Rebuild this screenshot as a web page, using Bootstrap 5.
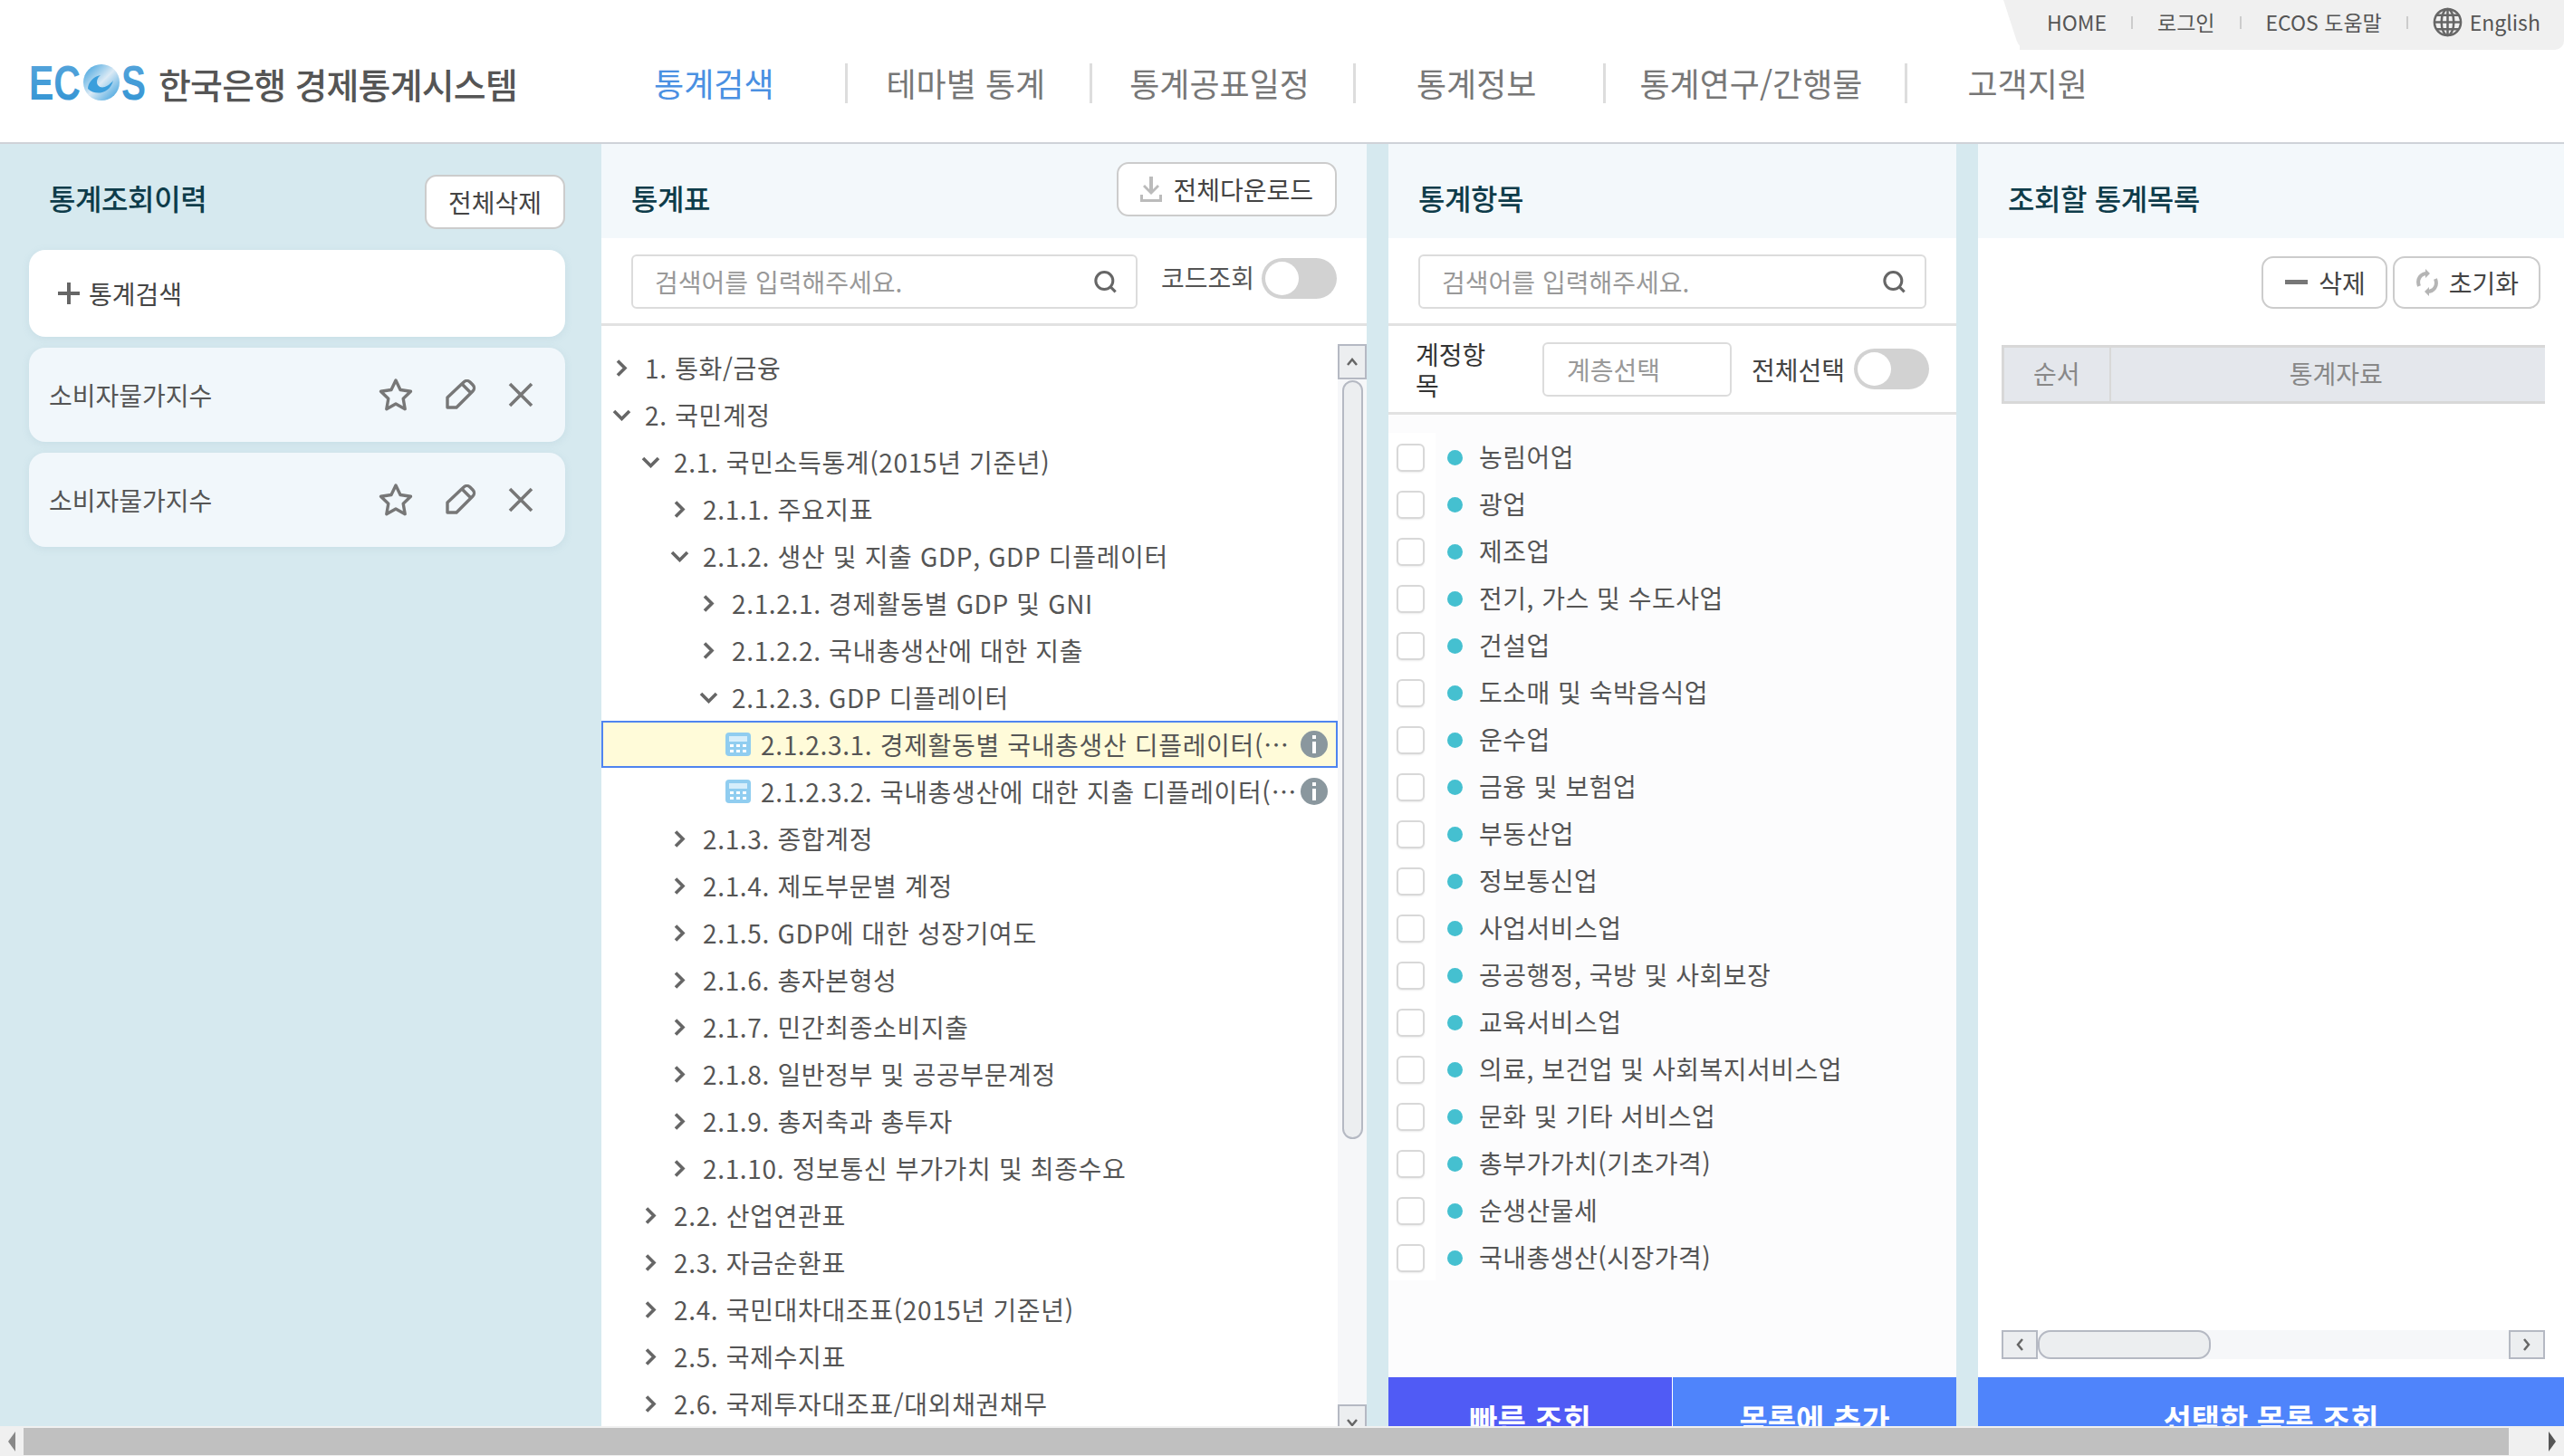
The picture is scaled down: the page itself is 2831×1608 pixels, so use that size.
<!DOCTYPE html>
<html lang="ko">
<head>
    <meta charset="UTF-8">
    <title>ECOS 한국은행 경제통계시스템</title>
    <link href="https://cdn.jsdelivr.net/npm/bootstrap@5.3.3/dist/css/bootstrap.min.css" rel="stylesheet">
    <script src="https://cdn.jsdelivr.net/npm/bootstrap@5.3.3/dist/js/bootstrap.bundle.min.js"></script>
    <style>
        html, body { height: 100%; overflow: hidden; }
        body { font-family: "Noto Sans CJK KR", "Noto Sans", sans-serif; font-size: 28px; color: #555; background: #fff; }

        /* header */
        .top-head { height: 159px; border-bottom: 2px solid #cfd2d8; }
        .util-tab { position: relative; height: 55px; width: 601px; padding: 0 0 6px 30px; background: #f0f0f0; border-bottom-right-radius: 10px; font-size: 23px; color: #555; }
        .util-tab::before { content: ""; position: absolute; left: -9px; top: 0; bottom: 0; width: 40px; background: #f0f0f0; transform: skewX(18deg); border-bottom-left-radius: 10px; }
        .util-tab > * { position: relative; }
        .util-sep { width: 2px; height: 14px; background: #ccc; margin: 0 27px; }
        .head-row { height: 102px; padding: 0 0 28px 32px; }
        .logo-mark { flex: none; font-family: "Liberation Sans", sans-serif; font-weight: 700; font-size: 53px; }
        .logo-kr { font-size: 39px; font-weight: 500; color: #555; margin-left: 14px; letter-spacing: -.8px; white-space: nowrap; line-height: 1; }
        .gnb { margin-left: 151px; }
        .gnb-item { font-size: 36px; color: #777; white-space: nowrap; line-height: 1.2; border-left: 3px solid #ddd; }
        .gnb-item:nth-child(1) { border-left: 0; padding-right: 78px; color: #4a90e2; }
        .gnb-item:nth-child(2) { padding: 0 49px 0 43px; }
        .gnb-item:nth-child(3) { padding: 0 48px 0 41px; }
        .gnb-item:nth-child(4) { padding: 0 74px 0 67px; }
        .gnb-item:nth-child(5) { padding: 0 47px 0 37px; }
        .gnb-item:nth-child(6) { padding: 0 0 0 66px; }

        /* panels */
        .main-wrap { height: 1416px; overflow: hidden; background: #d6e9ef; align-items: flex-start; }
        .pane { height: 1452px; background: #fff; margin-right: 24px; }
        .pane-hist { width: 664px; padding: 0 40px 0 32px; background: transparent; margin-right: 0; }
        .pane-tree { width: 845px; }
        .pane-item { width: 627px; }
        .pane-list { flex: 1 1 0; margin-right: 0; min-width: 0; }
        .pane-head { height: 104px; padding: 0 33px; background: #f3f8fb; flex: none; }
        .pane-title { font-size: 32px; font-weight: 500; color: #0e3c4a; line-height: 1; letter-spacing: -.4px; white-space: nowrap; margin-top: 43px; }
        .hist-head { height: 117px; padding-left: 22px; }
        .ghost-btn { height: 60px; padding: 0 24px; border: 2px solid #ccc; border-radius: 13px; background: #fff; font-size: 28px; color: #444; line-height: 1; white-space: nowrap; display: inline-flex; align-items: center; gap: 12px; }
        .ghost-btn:hover { background: #fff; border-color: #ccc; color: #444; }
        .hist-btn { margin-top: 34px; }
        .tree-dl { margin-top: 20px; }
        .hist-card { height: 104px; margin-bottom: 12px; padding: 0 35px 0 22px; border-radius: 18px; background: #f1f7fb; box-shadow: 0 2px 8px rgba(120,160,180,.15); color: #555; }
        .hist-add { height: 96px; gap: 10px; background: #fff; padding: 0 32px; color: #444; }
        .hist-icons { width: 171px; }

        .search-box { height: 60px; padding: 0 20px 0 24px; border: 2px solid #dcdcdc; border-radius: 6px; background: #fff; }
        .search-box input { border: 0; padding: 0; font-size: 28px; background: transparent; box-shadow: none; color: #555; }
        .search-box input::placeholder, .level-pick::placeholder { color: #999; }
        .search-box input:focus { box-shadow: none; }
        .code-label { line-height: 50px; white-space: nowrap; }
        .toggle-track { position: relative; flex: none; width: 83px; height: 45px; border-radius: 23px; background: #d2d2d2; }
        .toggle-track::after { content: ""; position: absolute; left: 4px; top: 4px; width: 37px; height: 37px; border-radius: 50%; background: #fff; }
        .tool-row { height: 97px; padding: 18px 33px 0; border-bottom: 3px solid #e2e2e2; flex: none; }

        /* tree */
        .tree-wrap { flex: 1 1 0; min-height: 0; }
        .tree-list { flex: 1 1 0; min-width: 0; padding-top: 20px; }
        .tree-row { height: 52px; color: #555; white-space: nowrap; border: 2px solid transparent; }
        .tree-row.is-picked { background: #fffbd9; border-color: #4f84f0; }
        .tree-cap { min-width: 0; flex: 1 1 0; overflow: hidden; text-overflow: ellipsis; letter-spacing: .65px; line-height: 1.45; }
        .tree-cap.has-chev { margin-left: 10px; }
        .chev-cell { width: 32px; flex: none; display: flex; justify-content: center; }
        .calc-cell { width: 39px; flex: none; display: flex; }
        .info-dot { flex: none; margin: 0 9px 0 3px; }

        /* drawn scrollbars, the reference shows the old styled ones */
        .vbar { width: 32px; flex: none; background: #f6f7f9; margin: 20px 0 21px; }
        .sb-btn { background: #eceef0; border: 2px solid #b5b9c3; display: flex; align-items: center; justify-content: center; flex: none; }
        .vbar .sb-btn { height: 39px; }
        .vbar-thumb { height: 838px; width: 23px; margin: 1px auto; background: #eceef0; border: 2px solid #b5b9c3; border-radius: 12px; flex: none; }
        .hbar { height: 32px; background: #f6f7f9; margin: 0 21px 20px 26px; flex: none; }
        .hbar .sb-btn { width: 40px; }
        .hbar-thumb { width: 191px; background: #eceef0; border: 2px solid #b5b9c3; border-radius: 14px; }

        /* items */
        .level-row { height: 98px; padding: 0 30px; border-bottom: 3px solid #e2e2e2; flex: none; }
        .level-pick { width: 209px; height: 60px; padding: 0 0 0 25px; border: 2px solid #dcdcdc; border-radius: 6px; font-size: 28px; box-shadow: none; }
        .level-label { width: 90px; margin-right: 50px; flex: none; line-height: 34px; color: #333; font-size: 28px; }
        .level-all { margin-left: 22px; color: #444; white-space: nowrap; }
        .item-list { flex: 1 1 0; min-height: 0; padding-top: 20px; background: #fcfcfd; }
        .item-row { height: 52px; color: #555; white-space: nowrap; letter-spacing: .5px; }
        .item-name { padding-top: 1px; line-height: 1.45; }
        .check-cell { width: 52px; height: 52px; flex: none; background: #fff; display: flex; align-items: center; justify-content: center; }
        .check-cell .form-check-input { width: 31px; height: 31px; margin: 2px 0 0 -3px; border: 2px solid #d8d8d8; border-radius: 6px; box-shadow: 0 1px 2px rgba(0,0,0,.08); }
        .item-dot { width: 17px; height: 17px; border-radius: 50%; background: #45c0d0; margin: 2px 18px 0 13px; flex: none; }
        .act-btn { height: 90px; flex: 1 1 0; border: 0; border-radius: 0; font-size: 34px; font-weight: 700; color: #fff; background: #4f84fb; }
        .act-btn:hover { color: #fff; background: #4f84fb; }
        .act-btn.act-fast, .act-btn.act-fast:hover { background: #505bf5; margin-right: 1px; }
        .pane-list .act-btn { flex: none; }

        .list-tools { padding: 20px 26px 0 0; gap: 6px; flex: none; }
        .list-tools .ghost-btn { height: 58px; padding: 0 22px 0 24px; }
        .stat-table { margin: 40px 21px 0 26px; width: auto; table-layout: fixed; font-size: 28px; flex: none; }
        .stat-table th { height: 62px; padding: 0 0 3px 18px; background: #e4e7ec; border-style: solid; border-color: #d8d8d8; border-width: 3px 0; font-weight: 400; text-align: center; vertical-align: middle; color: #888; }
        .stat-table th:first-child { width: 118px; padding: 0 0 3px; border-right: 2px solid #d8d8d8; border-left: 3px solid #d8d8d8; }

        /* page scrollbar */
        .page-bar { height: 33px; background: #f0f0f0; padding: 2px 0 1px; }
        .page-thumb { flex: 1 1 0; background: #c0c0c0; }
        .page-end { width: 26px; display: flex; align-items: center; justify-content: center; flex: none; }
        .page-end.tail { width: 61px; padding-left: 35px; }
    </style>
</head>
<body>

<header class="top-head">
    <div class="d-flex justify-content-end">
        <div class="util-tab d-flex align-items-center">
            <span>HOME</span><i class="util-sep"></i>
            <span>로그인</span><i class="util-sep"></i>
            <span>ECOS 도움말</span><i class="util-sep"></i>
            <svg width="33" height="33" viewBox="0 0 34 34" fill="none" stroke="#666" stroke-width="2.6" class="me-2">
                <circle cx="17" cy="17" r="15"/><ellipse cx="17" cy="17" rx="7" ry="15"/>
                <path d="M17 2v30M2 17h30M4.500 9h25M4.500 25h25"/>
            </svg>
            <span>English</span>
        </div>
    </div>
    <div class="head-row d-flex align-items-center">
        <svg class="logo-mark" width="129" height="76" viewBox="0 -18 129 76">
            <defs>
                <linearGradient id="logoBlue" x1="0" y1="0" x2="0" y2="1">
                    <stop offset="0" stop-color="#5aa6dc"/><stop offset="1" stop-color="#2f93d3"/>
                </linearGradient>
                <linearGradient id="logoBall" x1="0" y1="0" x2="1" y2="1">
                    <stop offset="0" stop-color="#2f9bdc"/><stop offset=".5" stop-color="#dbeaf5"/><stop offset="1" stop-color="#2f9bdc"/>
                </linearGradient>
            </defs>
            <text x="0" y="38" fill="url(#logoBlue)" textLength="57" lengthAdjust="spacingAndGlyphs">EC</text>
            <circle cx="80" cy="19" r="20" fill="url(#logoBall)"/>
            <path d="M65 26c8 8 24 6 28-9-6 7-13 10-17 5-2-3-1-8 3-11-7 1-14 8-14 15z" fill="#3a9edc"/>
            <text x="102" y="38" fill="url(#logoBlue)" textLength="27" lengthAdjust="spacingAndGlyphs">S</text>
        </svg>
        <span class="logo-kr">한국은행 경제통계시스템</span>
        <nav class="gnb d-flex align-items-center">
            <span class="gnb-item">통계검색</span>
            <span class="gnb-item">테마별 통계</span>
            <span class="gnb-item">통계공표일정</span>
            <span class="gnb-item">통계정보</span>
            <span class="gnb-item">통계연구/간행물</span>
            <span class="gnb-item">고객지원</span>
        </nav>
    </div>
</header>

<main class="main-wrap d-flex">
    <!-- 통계조회이력 -->
    <section class="pane pane-hist">
        <div class="hist-head d-flex justify-content-between align-items-start">
            <span class="pane-title">통계조회이력</span>
            <button type="button" class="btn ghost-btn hist-btn">전체삭제</button>
        </div>
        <div class="hist-card hist-add d-flex align-items-center">
            <svg width="24" height="24" viewBox="0 0 24 24" stroke="#666" stroke-width="4"><path d="M12 0v24M0 12h24"/></svg>
            <span>통계검색</span>
        </div>
        <div class="hist-card d-flex align-items-center justify-content-between">
            <span>소비자물가지수</span>
            <span class="hist-icons d-flex align-items-center justify-content-between">
                <svg width="38" height="38" viewBox="0 0 38 38" fill="none" stroke="#777" stroke-width="3.4" stroke-linejoin="round"><path d="M19 3l5 10.500 11.500 1.700-8.300 8 2 11.500L19 29l-10.200 5.700 2-11.500-8.300-8L14 13.500z"/></svg>
                <svg width="36" height="34" viewBox="0 0 36 34" fill="none" stroke="#777" stroke-width="3.4" stroke-linejoin="round"><path d="M3 31V20L21 3c2-2 5-2 7 0l3 3c2 2 2 5 0 7L13 31zM20 6l9 9"/></svg>
                <svg width="28" height="28" viewBox="0 0 28 28" stroke="#777" stroke-width="3.6"><path d="M2 2l24 24M26 2L2 26"/></svg>
            </span>
        </div>
        <div class="hist-card d-flex align-items-center justify-content-between">
            <span>소비자물가지수</span>
            <span class="hist-icons d-flex align-items-center justify-content-between">
                <svg width="38" height="38" viewBox="0 0 38 38" fill="none" stroke="#777" stroke-width="3.4" stroke-linejoin="round"><path d="M19 3l5 10.500 11.500 1.700-8.300 8 2 11.500L19 29l-10.200 5.700 2-11.500-8.300-8L14 13.500z"/></svg>
                <svg width="36" height="34" viewBox="0 0 36 34" fill="none" stroke="#777" stroke-width="3.4" stroke-linejoin="round"><path d="M3 31V20L21 3c2-2 5-2 7 0l3 3c2 2 2 5 0 7L13 31zM20 6l9 9"/></svg>
                <svg width="28" height="28" viewBox="0 0 28 28" stroke="#777" stroke-width="3.6"><path d="M2 2l24 24M26 2L2 26"/></svg>
            </span>
        </div>
    </section>

    <!-- 통계표 -->
    <section class="pane pane-tree d-flex flex-column">
        <div class="pane-head d-flex justify-content-between align-items-start">
            <span class="pane-title">통계표</span>
            <button type="button" class="btn ghost-btn tree-dl">
                <svg width="24" height="28" viewBox="0 0 24 28" fill="#bbb"><path d="M10 0h4v14l5-5 2 2-9 9-9-9 2-2 5 5zM0 20h3v5h18v-5h3v8H0z"/></svg>
                전체다운로드
            </button>
        </div>
        <div class="tool-row d-flex align-items-start">
            <div class="search-box d-flex align-items-center" style="width:559px">
                <input type="text" class="form-control" placeholder="검색어를 입력해주세요.">
                <svg width="28" height="28" viewBox="0 0 28 28" fill="none" stroke="#666" stroke-width="3.2"><circle cx="13" cy="13" r="10"/><path d="M20 20l6 6"/></svg>
            </div>
            <span class="code-label ms-auto">코드조회</span>
            <span class="toggle-track ms-2 mt-1"></span>
        </div>
        <div class="tree-wrap d-flex">
            <div class="tree-list" id="treeList"></div>
            <div class="vbar d-flex flex-column">
                <div class="sb-btn"><svg width="14" height="10" viewBox="0 0 14 10" fill="none" stroke="#666" stroke-width="2.500"><path d="M2 8l5-6 5 6"/></svg></div>
                <div class="vbar-thumb"></div>
                <div class="sb-btn mt-auto"><svg width="14" height="10" viewBox="0 0 14 10" fill="none" stroke="#666" stroke-width="2.500"><path d="M2 2l5 6 5-6"/></svg></div>
            </div>
        </div>
    </section>

    <!-- 통계항목 -->
    <section class="pane pane-item d-flex flex-column">
        <div class="pane-head d-flex align-items-start">
            <span class="pane-title">통계항목</span>
        </div>
        <div class="tool-row">
            <div class="search-box d-flex align-items-center">
                <input type="text" class="form-control" placeholder="검색어를 입력해주세요.">
                <svg width="28" height="28" viewBox="0 0 28 28" fill="none" stroke="#666" stroke-width="3.2"><circle cx="13" cy="13" r="10"/><path d="M20 20l6 6"/></svg>
            </div>
        </div>
        <div class="level-row d-flex align-items-center">
            <span class="level-label">계정항목</span>
            <input type="text" class="form-control level-pick" placeholder="계층선택">
            <span class="level-all">전체선택</span>
            <span class="toggle-track ms-auto"></span>
        </div>
        <div class="item-list" id="itemList"></div>
        <div class="d-flex">
            <button type="button" class="btn act-btn act-fast">빠른 조회</button>
            <button type="button" class="btn act-btn">목록에 추가</button>
        </div>
    </section>

    <!-- 조회할 통계목록 -->
    <section class="pane pane-list d-flex flex-column">
        <div class="pane-head d-flex align-items-start">
            <span class="pane-title">조회할 통계목록</span>
        </div>
        <div class="list-tools d-flex justify-content-end">
            <button type="button" class="btn ghost-btn">
                <svg width="25" height="6" viewBox="0 0 25 6" fill="#777"><rect width="25" height="5"/></svg>
                삭제
            </button>
            <button type="button" class="btn ghost-btn">
                <svg width="24" height="30" viewBox="0 0 24 30" fill="none" stroke="#b5b5b5" stroke-width="4"><path d="M3 19c-3-8 2-14 9-14M21 11c3 8-2 14-9 14"/><path d="M10 0l5 5-5 5zM14 20l-5 5 5 5z" fill="#b5b5b5" stroke="none"/></svg>
                초기화
            </button>
        </div>
        <table class="table stat-table mb-0">
            <thead><tr><th>순서</th><th>통계자료</th></tr></thead>
        </table>
        <div class="hbar d-flex mt-auto">
            <div class="sb-btn"><svg width="10" height="16" viewBox="0 0 10 16" fill="none" stroke="#666" stroke-width="2.500"><path d="M8 2L3 8l5 6"/></svg></div>
            <div class="hbar-thumb"></div>
            <div class="sb-btn ms-auto"><svg width="10" height="16" viewBox="0 0 10 16" fill="none" stroke="#666" stroke-width="2.500"><path d="M2 2l5 6-5 6"/></svg></div>
        </div>
        <button type="button" class="btn act-btn">선택한 목록 조회</button>
    </section>
</main>

<div class="page-bar d-flex">
    <div class="page-end"><svg width="10" height="22" viewBox="0 0 10 22" fill="#888"><path d="M9 0v22L1 11z"/></svg></div>
    <div class="page-thumb"></div>
    <div class="page-end tail"><svg width="10" height="22" viewBox="0 0 10 22" fill="#555"><path d="M1 0v22l8-11z"/></svg></div>
</div>

<script>
    const chevRight = '<svg width="13" height="19" viewBox="0 0 13 19" fill="none" stroke="#666" stroke-width="3.600"><path d="M2 1.500l8 8-8 8"/></svg>';
    const chevDown = '<svg width="21" height="13" viewBox="0 0 21 13" fill="none" stroke="#666" stroke-width="3.600"><path d="M2 2l8.500 8.500L19 2"/></svg>';
    const calcIcon = '<svg width="28" height="26" viewBox="0 0 28 26"><rect width="28" height="26" rx="4" fill="#90cdf0"/><rect x="4" y="4" width="20" height="6" fill="#d6eefb"/><g fill="#fff"><rect x="5" y="13" width="4" height="3"/><rect x="12" y="13" width="4" height="3"/><rect x="19" y="13" width="4" height="3"/><rect x="5" y="19" width="4" height="3"/><rect x="12" y="19" width="4" height="3"/><rect x="19" y="19" width="4" height="3"/></g></svg>';
    const infoIcon = '<svg class="info-dot" width="30" height="30" viewBox="0 0 30 30"><circle cx="15" cy="15" r="15" fill="#8a979e"/><rect x="13" y="5" width="4" height="4" fill="#fff"/><rect x="13" y="12" width="4" height="13" fill="#fff"/></svg>';

    // [level, text, state] o=open, c=closed, f=file, p=picked file
    const treeRows = [
        [0, '1. 통화/금융', 'c'],
        [0, '2. 국민계정', 'o'],
        [1, '2.1. 국민소득통계(2015년 기준년)', 'o'],
        [2, '2.1.1. 주요지표', 'c'],
        [2, '2.1.2. 생산 및 지출 GDP, GDP 디플레이터', 'o'],
        [3, '2.1.2.1. 경제활동별 GDP 및 GNI', 'c'],
        [3, '2.1.2.2. 국내총생산에 대한 지출', 'c'],
        [3, '2.1.2.3. GDP 디플레이터', 'o'],
        [4, '2.1.2.3.1. 경제활동별 국내총생산 디플레이터(계절조정, 명목)', 'p'],
        [4, '2.1.2.3.2. 국내총생산에 대한 지출 디플레이터(계절조정, 명목)', 'f'],
        [2, '2.1.3. 종합계정', 'c'],
        [2, '2.1.4. 제도부문별 계정', 'c'],
        [2, '2.1.5. GDP에 대한 성장기여도', 'c'],
        [2, '2.1.6. 총자본형성', 'c'],
        [2, '2.1.7. 민간최종소비지출', 'c'],
        [2, '2.1.8. 일반정부 및 공공부문계정', 'c'],
        [2, '2.1.9. 총저축과 총투자', 'c'],
        [2, '2.1.10. 정보통신 부가가치 및 최종수요', 'c'],
        [1, '2.2. 산업연관표', 'c'],
        [1, '2.3. 자금순환표', 'c'],
        [1, '2.4. 국민대차대조표(2015년 기준년)', 'c'],
        [1, '2.5. 국제수지표', 'c'],
        [1, '2.6. 국제투자대조표/대외채권채무', 'c']
    ];

    const items = ['농림어업', '광업', '제조업', '전기, 가스 및 수도사업', '건설업', '도소매 및 숙박음식업', '운수업', '금융 및 보험업', '부동산업', '정보통신업', '사업서비스업', '공공행정, 국방 및 사회보장', '교육서비스업', '의료, 보건업 및 사회복지서비스업', '문화 및 기타 서비스업', '총부가가치(기초가격)', '순생산물세', '국내총생산(시장가격)'];

    document.getElementById('treeList').innerHTML = treeRows.map(([level, text, state]) => {
        const isFile = state === 'f' || state === 'p';
        const lead = isFile
            ? `<span class="calc-cell">${calcIcon}</span>`
            : `<span class="chev-cell">${state === 'o' ? chevDown : chevRight}</span>`;
        const pad = isFile ? 135 : 4 + level * 32;
        return `<div class="tree-row d-flex align-items-center ${state === 'p' ? 'is-picked' : ''}" style="padding-left:${pad}px">
            ${lead}<span class="tree-cap ${isFile ? '' : 'has-chev'}">${text}</span>${isFile ? infoIcon : ''}
        </div>`;
    }).join('');

    document.getElementById('itemList').innerHTML = items.map(name => `
        <div class="item-row d-flex align-items-center">
            <span class="check-cell"><input class="form-check-input" type="checkbox"></span>
            <span class="item-dot"></span><span class="item-name">${name}</span>
        </div>`).join('');
</script>
</body>
</html>
